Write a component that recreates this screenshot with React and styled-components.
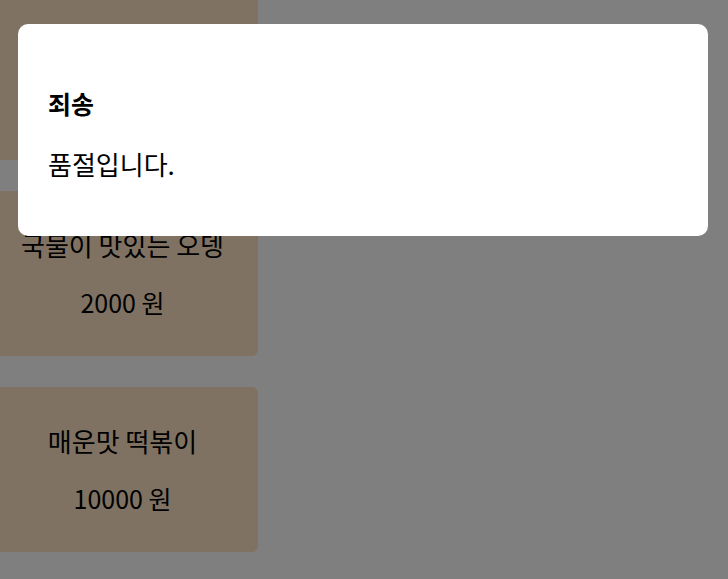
import React from "react";
import styled, { createGlobalStyle } from "styled-components";

const GlobalStyle = createGlobalStyle`
  html, body {
    margin: 0;
    padding: 0;
    background: #ffffff;
    font-family: "Noto Sans CJK KR", "Noto Sans", sans-serif;
    overflow: hidden;
  }
`;

const menu = [
  { name: "바삭한 순대", price: 3000 },
  { name: "국물이 맛있는 오뎅", price: 2000 },
  { name: "매운맛 떡볶이", price: 10000 },
];

const App = () => {
  return (
    <>
      <GlobalStyle />
      <Page>
        <MenuList>
          {menu.map((item) => (
            <MenuCard key={item.name}>
              <MenuName>{item.name}</MenuName>
              <MenuPrice>{item.price} 원</MenuPrice>
            </MenuCard>
          ))}
        </MenuList>
      </Page>
      <Overlay>
        <Modal>
          <ModalTitle>죄송</ModalTitle>
          <ModalText>품절입니다.</ModalText>
        </Modal>
      </Overlay>
    </>
  );
};

const Page = styled.div`
  width: 728px;
  height: 579px;
  overflow: hidden;
`;

const MenuList = styled.ul`
  list-style: none;
  margin: -5px 0 0 -13px;
  padding: 0;
  display: flex;
  flex-direction: column;
  gap: 31px;
  width: 271px;
`;

const MenuCard = styled.li`
  height: 165px;
  background: #ffe4c4;
  border-radius: 6px;
  display: flex;
  flex-direction: column;
  align-items: center;
  justify-content: center;
  gap: 25px;
  color: #000;
`;

const MenuName = styled.span`
  font-size: 26px;
  line-height: 32px;
`;

const MenuPrice = styled.span`
  font-size: 25px;
  line-height: 32px;
`;

const Overlay = styled.div`
  position: fixed;
  inset: 0;
  background: rgba(0, 0, 0, 0.5);
  padding: 24px 20px 0 18px;
`;

const Modal = styled.div`
  height: 212px;
  box-sizing: border-box;
  background: #ffffff;
  border-radius: 10px;
  padding: 63px 30px 0;
  display: flex;
  flex-direction: column;
  gap: 29px;
  color: #000;
`;

const ModalTitle = styled.h3`
  margin: 0;
  font-size: 25px;
  line-height: 32px;
  font-weight: 700;
`;

const ModalText = styled.p`
  margin: 0;
  font-size: 26px;
  line-height: 32px;
`;

export default App;
